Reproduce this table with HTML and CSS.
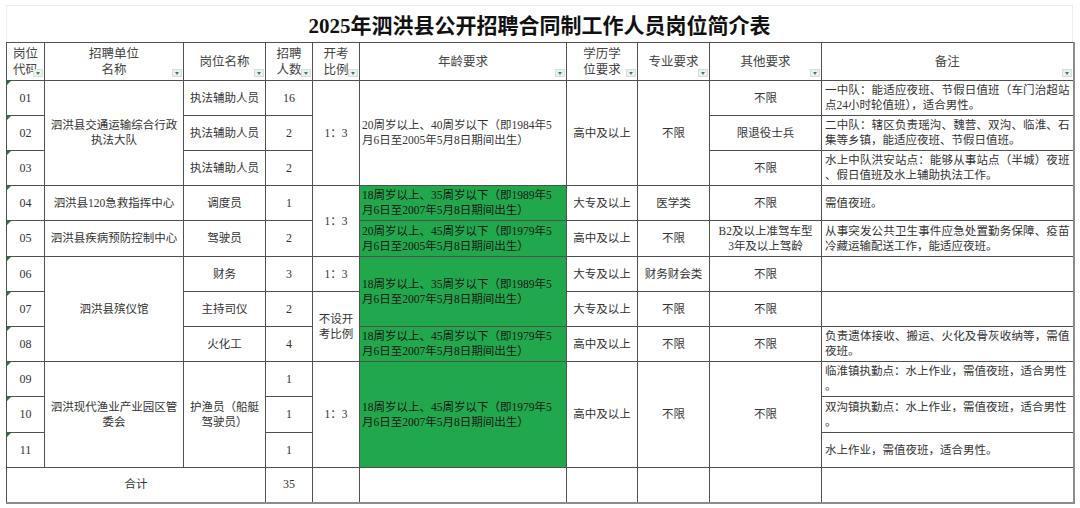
FILE: index.html
```html
<!DOCTYPE html>
<html lang="zh-CN">
<head>
<meta charset="utf-8">
<title>2025年泗洪县公开招聘合同制工作人员岗位简介表</title>
<link rel="stylesheet" href="styles.css">
</head>
<body>
<div class="sheet">
  <div class="title">2025年泗洪县公开招聘合同制工作人员岗位简介表</div>
  <table class="grid">
    <colgroup>
      <col class="w-code"><col class="w-unit"><col class="w-post"><col class="w-num"><col class="w-ratio">
      <col class="w-age"><col class="w-edu"><col class="w-major"><col class="w-other"><col class="w-note">
    </colgroup>
    <thead>
      <tr class="hdr">
        <th>岗位<br>代码<i class="dd"></i></th>
        <th>招聘单位<br>名称<i class="dd"></i></th>
        <th>岗位名称<i class="dd"></i></th>
        <th>招聘<br>人数<i class="dd"></i></th>
        <th>开考<br>比例<i class="dd"></i></th>
        <th>年龄要求<i class="dd"></i></th>
        <th>学历学<br>位要求<i class="dd"></i></th>
        <th>专业要求<i class="dd"></i></th>
        <th>其他要求<i class="dd"></i></th>
        <th class="note-h">备注<i class="dd"></i></th>
      </tr>
    </thead>
    <tbody>
      <tr>
        <td class="code">01</td>
        <td rowspan="3">泗洪县交通运输综合行政执法大队</td>
        <td>执法辅助人员</td>
        <td class="num">16</td>
        <td rowspan="3">1：3</td>
        <td rowspan="3" class="age">20周岁以上、40周岁以下（即1984年5月6日至2005年5月8日期间出生）</td>
        <td rowspan="3">高中及以上</td>
        <td rowspan="3">不限</td>
        <td>不限</td>
        <td class="note">一中队：能适应夜班、节假日值班（车门治超站点24小时轮值班），适合男性。</td>
      </tr>
      <tr>
        <td class="code">02</td>
        <td>执法辅助人员</td>
        <td class="num">2</td>
        <td>限退役士兵</td>
        <td class="note">二中队：辖区负责瑶沟、魏营、双沟、临淮、石集等乡镇，能适应夜班、节假日值班。</td>
      </tr>
      <tr>
        <td class="code">03</td>
        <td>执法辅助人员</td>
        <td class="num">2</td>
        <td>不限</td>
        <td class="note">水上中队洪安站点：能够从事站点（半城）夜班、假日值班及水上辅助执法工作。</td>
      </tr>
      <tr>
        <td class="code">04</td>
        <td>泗洪县120急救指挥中心</td>
        <td>调度员</td>
        <td class="num">1</td>
        <td rowspan="2">1：3</td>
        <td class="age green">18周岁以上、35周岁以下（即1989年5月6日至2007年5月8日期间出生）</td>
        <td>大专及以上</td>
        <td>医学类</td>
        <td>不限</td>
        <td class="note">需值夜班。</td>
      </tr>
      <tr class="tall">
        <td class="code">05</td>
        <td>泗洪县疾病预防控制中心</td>
        <td>驾驶员</td>
        <td class="num">2</td>
        <td class="age green">20周岁以上、45周岁以下（即1979年5月6日至2005年5月8日期间出生）</td>
        <td>高中及以上</td>
        <td>不限</td>
        <td>B2及以上准驾车型<br>3年及以上驾龄</td>
        <td class="note">从事突发公共卫生事件应急处置勤务保障、疫苗冷藏运输配送工作，能适应夜班。</td>
      </tr>
      <tr>
        <td class="code">06</td>
        <td rowspan="3">泗洪县殡仪馆</td>
        <td>财务</td>
        <td class="num">3</td>
        <td>1：3</td>
        <td rowspan="2" class="age green">18周岁以上、35周岁以下（即1989年5月6日至2007年5月8日期间出生）</td>
        <td>大专及以上</td>
        <td>财务财会类</td>
        <td>不限</td>
        <td class="note"></td>
      </tr>
      <tr>
        <td class="code">07</td>
        <td>主持司仪</td>
        <td class="num">2</td>
        <td rowspan="2">不设开考比例</td>
        <td>大专及以上</td>
        <td>不限</td>
        <td>不限</td>
        <td class="note"></td>
      </tr>
      <tr>
        <td class="code">08</td>
        <td>火化工</td>
        <td class="num">4</td>
        <td class="age green">18周岁以上、45周岁以下（即1979年5月6日至2007年5月8日期间出生）</td>
        <td>高中及以上</td>
        <td>不限</td>
        <td>不限</td>
        <td class="note">负责遗体接收、搬运、火化及骨灰收纳等，需值夜班。</td>
      </tr>
      <tr>
        <td class="code">09</td>
        <td rowspan="3">泗洪现代渔业产业园区管委会</td>
        <td rowspan="3">护渔员（船艇驾驶员）</td>
        <td class="num">1</td>
        <td rowspan="3">1：3</td>
        <td rowspan="3" class="age green">18周岁以上、45周岁以下（即1979年5月6日至2007年5月8日期间出生）</td>
        <td rowspan="3">高中及以上</td>
        <td rowspan="3">不限</td>
        <td rowspan="3">不限</td>
        <td class="note">临淮镇执勤点：水上作业，需值夜班，适合男性<br>。</td>
      </tr>
      <tr class="tall">
        <td class="code">10</td>
        <td class="num">1</td>
        <td class="note">双沟镇执勤点：水上作业，需值夜班，适合男性<br>。</td>
      </tr>
      <tr>
        <td class="code">11</td>
        <td class="num">1</td>
        <td class="note">水上作业，需值夜班，适合男性。</td>
      </tr>
      <tr class="total">
        <td colspan="3">合计</td>
        <td class="num">35</td>
        <td></td>
        <td></td>
        <td></td>
        <td></td>
        <td></td>
        <td class="note"></td>
      </tr>
    </tbody>
  </table>
</div>
</body>
</html>
```

FILE: styles.css
```css
body {
  margin: 0;
  background: #ffffff;
  font-family: "Liberation Serif", "Noto Sans CJK SC", serif;
  color: #333333;
}

.sheet {
  width: 1067px;
  padding: 5px 0 0 6px;
}

.title {
  height: 37px;
  box-sizing: border-box;
  border: 1px solid #ececec;
  border-bottom: none;
  display: flex;
  align-items: center;
  justify-content: center;
  font-size: 21px;
  font-weight: bold;
  color: #111111;
}

.grid {
  border-collapse: collapse;
  table-layout: fixed;
  width: 1067px;
  font-size: 11.5px;
  line-height: 15px;
}

.w-code { width: 38px; }
.w-unit { width: 139px; }
.w-post { width: 82px; }
.w-num { width: 47px; }
.w-ratio { width: 47px; }
.w-age { width: 207px; }
.w-edu { width: 71px; }
.w-major { width: 72px; }
.w-other { width: 112px; }
.w-note { width: 252px; }

.grid th,
.grid td {
  border: 1px solid #505050;
  padding: 0 2px;
  text-align: center;
  vertical-align: middle;
  font-weight: normal;
  overflow: hidden;
}

.grid .hdr th {
  height: 37px;
  font-size: 12.5px;
  line-height: 16px;
  color: #444444;
  position: relative;
}

.grid tbody tr {
  height: 35px;
}

.grid tbody tr.tall {
  height: 36px;
}

.dd {
  position: absolute;
  right: 1px;
  bottom: 3px;
  width: 10px;
  height: 8px;
  box-sizing: border-box;
  background: #eef0ee;
  border: 1px solid #d9ddd9;
}

.dd::after {
  content: "";
  position: absolute;
  left: 2px;
  top: 2px;
  border-left: 2.5px solid transparent;
  border-right: 2.5px solid transparent;
  border-top: 3px solid #1f8f55;
}

.grid td.num,
.grid td.code {
  font-size: 12px;
}

.grid td.code {
  position: relative;
}

.grid td.code::before {
  content: "";
  position: absolute;
  left: 0;
  top: 0;
  border-top: 4px solid #2b7a3a;
  border-right: 4px solid transparent;
}

.grid td.age {
  text-align: left;
  padding: 0 10px 0 2px;
}

.grid td.green {
  background: #22a84c;
  color: #151515;
}

.grid td.note {
  text-align: justify;
  padding: 0 3px;
  line-break: anywhere;
  border-right: 2px solid #8c8c8c;
}

.grid th.note-h {
  border-right: 2px solid #8c8c8c;
}

.grid .total td {
  border-bottom: 2px solid #8c8c8c;
}
```
